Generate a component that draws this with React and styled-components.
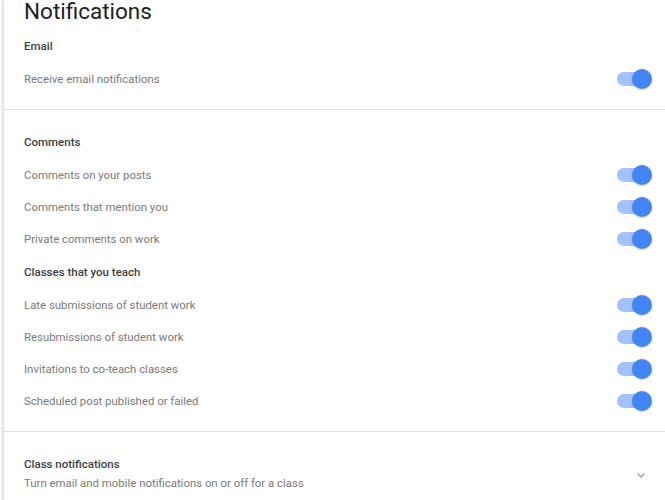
import React from 'react';
import styled, { createGlobalStyle } from 'styled-components';

const GlobalStyle = createGlobalStyle`
  html, body {
    margin: 0;
    padding: 0;
    background: #fff;
    font-family: Roboto, "Liberation Sans", Arial, sans-serif;
    overflow: hidden;
  }
`;

const Page = styled.div`
  width: 665px;
  height: 500px;
  overflow: hidden;
  padding-left: 3px;
  box-sizing: border-box;
`;

const Card = styled.div`
  background: #fff;
  border-left: 1px solid #e3e3e3;
  border-top: 1px solid #e6e6e6;
  box-shadow: -1px 0 2px rgba(60, 64, 67, 0.12), 0 1px 2px rgba(60, 64, 67, 0.1);
  margin-top: -1px;
`;

const Section = styled.div`
  padding: ${(p) => p.$top}px 13px ${(p) => p.$bottom}px 20px;
  border-bottom: ${(p) => (p.$divider ? '1px solid #e0e0e0' : 'none')};
`;

const Title = styled.h1`
  margin: 0 0 8px;
  font-size: 22.5px;
  line-height: 22px;
  font-weight: 400;
  color: #202124;
`;

const Heading = styled.div`
  height: 32px;
  line-height: 32px;
  margin: ${(p) => (p.$first ? '0 0 1px' : '1px 0 1px')};
  font-size: 11.5px;
  font-weight: 500;
  color: #3c4043;
`;

const Row = styled.div`
  height: 32px;
  display: flex;
  align-items: center;
  justify-content: space-between;
  font-size: 11.4px;
  color: #7a7a7a;
`;

const Switch = styled.span`
  position: relative;
  width: 35px;
  height: 20px;
  display: inline-block;
`;

const Track = styled.span`
  position: absolute;
  left: 0;
  top: 3px;
  width: 32px;
  height: 14px;
  border-radius: 7px;
  background: #a1c2fa;
`;

const Thumb = styled.span`
  position: absolute;
  right: 0;
  top: 0;
  width: 20px;
  height: 20px;
  border-radius: 50%;
  background: #4285f4;
  box-shadow: 0 1px 2px rgba(0, 0, 0, 0.2);
`;

const ExpandRow = styled.div`
  display: flex;
  align-items: center;
  justify-content: space-between;
`;

const ExpandTitle = styled.div`
  font-size: 11.5px;
  line-height: 16px;
  font-weight: 500;
  color: #3c4043;
`;

const ExpandSub = styled.div`
  margin-top: 3px;
  font-size: 11.4px;
  line-height: 16px;
  color: #7a7a7a;
`;

const Chevron = styled.svg`
  width: 16px;
  height: 16px;
  margin-right: 3px;
  margin-top: 2px;
  color: #9aa0a6;
`;

const Toggle = () => (
  <Switch>
    <Track />
    <Thumb />
  </Switch>
);

const SettingRow = ({ label }) => (
  <Row>
    <span>{label}</span>
    <Toggle />
  </Row>
);

const comments = [
  'Comments on your posts',
  'Comments that mention you',
  'Private comments on work',
];

const teaching = [
  'Late submissions of student work',
  'Resubmissions of student work',
  'Invitations to co-teach classes',
  'Scheduled post published or failed',
];

export default function App() {
  return (
    <Page>
      <GlobalStyle />
      <Card>
        <Section $top={0} $bottom={14} $divider>
          <Title>Notifications</Title>
          <Heading $first>Email</Heading>
          <SettingRow label="Receive email notifications" />
        </Section>
        <Section $top={16} $bottom={14} $divider>
          <Heading $first>Comments</Heading>
          {comments.map((c) => (
            <SettingRow key={c} label={c} />
          ))}
          <Heading>Classes that you teach</Heading>
          {teaching.map((c) => (
            <SettingRow key={c} label={c} />
          ))}
        </Section>
        <Section $top={24} $bottom={20}>
          <ExpandRow>
            <div>
              <ExpandTitle>Class notifications</ExpandTitle>
              <ExpandSub>Turn email and mobile notifications on or off for a class</ExpandSub>
            </div>
            <Chevron viewBox="0 0 16 16" fill="none" stroke="currentColor" strokeWidth="1.3">
              <path d="M4.5 6.5 L8 10 L11.5 6.5" />
            </Chevron>
          </ExpandRow>
        </Section>
      </Card>
    </Page>
  );
}
